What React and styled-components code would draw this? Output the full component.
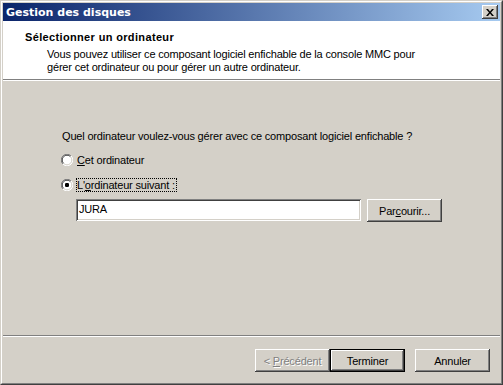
import React from 'react';
import styled, { createGlobalStyle } from 'styled-components';

const GlobalStyle = createGlobalStyle`
    body {
        margin: 0;
        background: #fff;
        font-family: "Liberation Sans", Arial, sans-serif;
        font-size: 11px;
        letter-spacing: -0.18px;
        color: #000;
    }
`;

const raised = `
    box-shadow:
        inset -1px -1px #404040,
        inset 1px 1px #fff,
        inset -2px -2px #808080,
        inset 2px 2px #d4d0c8;
`;

const Window = styled.div`
    width: 503px;
    height: 385px;
    box-sizing: border-box;
    border: 1px solid;
    border-color: #d4d0c8 #404040 #404040 #d4d0c8;
`;

const Frame = styled.div`
    height: 100%;
    box-sizing: border-box;
    border: 1px solid;
    border-color: #fff #808080 #808080 #fff;
    padding: 1px;
    background: #d4d0c8;
    display: flex;
    flex-direction: column;
`;

const TitleBar = styled.div`
    height: 18px;
    flex: none;
    display: flex;
    align-items: center;
    justify-content: space-between;
    padding: 0 2px 0 3px;
    background: linear-gradient(to right, #0a246a, #a6caf0);
    color: #fff;
    font-family: "DejaVu Sans", Verdana, sans-serif;
    font-weight: bold;
    font-size: 11px;
    letter-spacing: 0;
`;

const CloseButton = styled.div`
    width: 16px;
    height: 14px;
    box-sizing: border-box;
    background: #d4d0c8;
    display: flex;
    align-items: center;
    justify-content: center;
    ${raised}
`;

const Header = styled.div`
    height: 58px;
    flex: none;
    box-sizing: border-box;
    background: #fff;
    padding: 10px 0 0 22px;
`;

const HeaderTitle = styled.div`
    font-weight: bold;
    line-height: 13px;
    letter-spacing: 0.35px;
`;

const HeaderText = styled.div`
    margin-top: 4px;
    padding-left: 22px;
    line-height: 13px;
`;

const Etched = styled.div`
    flex: none;
    border-top: 1px solid #808080;
    border-bottom: 1px solid #fff;
`;

const Body = styled.div`
    flex: 1;
    padding: 49px 0 0 58px;
    display: flex;
    flex-direction: column;
`;

const Question = styled.div`
    line-height: 13px;
    padding-left: 1px;
    margin-bottom: 10px;
`;

const RadioRow = styled.div`
    height: 14px;
    display: flex;
    align-items: center;
    gap: ${props => props.focused ? 3 : 4}px;
    margin-bottom: ${props => props.last ? 7 : 11}px;
`;

const Label = styled.span`
    line-height: 12px;
    padding: 0 1px 0 0;
    border: 1px dotted ${props => props.focused ? '#000' : 'transparent'};
    margin-left: ${props => props.focused ? 0 : -1}px;
`;

const InputRow = styled.div`
    display: flex;
    align-items: flex-start;
    gap: 6px;
    padding-left: 15px;
`;

const TextBox = styled.div`
    width: 285px;
    height: 22px;
    box-sizing: border-box;
    background: #fff;
    padding: 4px 3px;
    line-height: 13px;
    box-shadow:
        inset 1px 1px #808080,
        inset -1px -1px #fff,
        inset 2px 2px #404040,
        inset -2px -2px #d4d0c8;
`;

const Button = styled.div`
    width: 75px;
    height: 23px;
    box-sizing: border-box;
    display: flex;
    align-items: center;
    justify-content: center;
    white-space: pre;
    background: #d4d0c8;
    color: ${props => props.disabled ? '#808080' : '#000'};
    text-shadow: ${props => props.disabled ? '1px 1px #fff' : 'none'};
    ${props => props.primary ? `
        border: 1px solid #000;
        box-shadow:
            inset -1px -1px #404040,
            inset 1px 1px #fff,
            inset -2px -2px #808080;
    ` : raised}
`;

const Footer = styled.div`
    flex: none;
    display: flex;
    justify-content: flex-end;
    padding: 12px 10px 10px 0;
`;

const Gap = styled.div`
    width: 10px;
`;

const Radio = ({ checked }) =>
    <svg width="12" height="12" viewBox="0 0 12 12">
        <circle cx="6" cy="6" r="5.5" fill="#fff" />
        <path d="M1.9 10.1 A5.5 5.5 0 0 1 10.1 1.9" fill="none" stroke="#808080" strokeWidth="1" />
        <path d="M10.1 1.9 A5.5 5.5 0 0 1 1.9 10.1" fill="none" stroke="#fff" strokeWidth="1" />
        <path d="M2.6 9.4 A4.5 4.5 0 0 1 9.4 2.6" fill="none" stroke="#404040" strokeWidth="1" />
        <path d="M9.4 2.6 A4.5 4.5 0 0 1 2.6 9.4" fill="none" stroke="#d4d0c8" strokeWidth="1" />
        {checked && <rect x="4" y="4" width="4" height="4" rx="1.2" fill="#000" />}
    </svg>;

const CloseIcon = () =>
    <svg width="8" height="7" viewBox="0 0 8 7">
        <path d="M0 0h2l2 2.5L6 0h2L5 3.5 8 7H6L4 4.5 2 7H0l3-3.5z" fill="#000" />
    </svg>;

const App = () =>
    <Window>
        <GlobalStyle />
        <Frame>
            <TitleBar>
                <span>Gestion des disques</span>
                <CloseButton><CloseIcon /></CloseButton>
            </TitleBar>
            <Header>
                <HeaderTitle>Sélectionner un ordinateur</HeaderTitle>
                <HeaderText>
                    Vous pouvez utiliser ce composant logiciel enfichable de la console MMC pour<br />
                    gérer cet ordinateur ou pour gérer un autre ordinateur.
                </HeaderText>
            </Header>
            <Etched />
            <Body>
                <Question>Quel ordinateur voulez-vous gérer avec ce composant logiciel enfichable ?</Question>
                <RadioRow>
                    <Radio />
                    <Label><u>C</u>et ordinateur</Label>
                </RadioRow>
                <RadioRow last focused>
                    <Radio checked />
                    <Label focused>L'<u>o</u>rdinateur suivant :</Label>
                </RadioRow>
                <InputRow>
                    <TextBox>JURA</TextBox>
                    <Button>Par<u>c</u>ourir...</Button>
                </InputRow>
            </Body>
            <Etched />
            <Footer>
                <Button disabled>{'< '}<u>P</u>récédent</Button>
                <Button primary>Terminer</Button>
                <Gap />
                <Button>Annuler</Button>
            </Footer>
        </Frame>
    </Window>;

export default App;
